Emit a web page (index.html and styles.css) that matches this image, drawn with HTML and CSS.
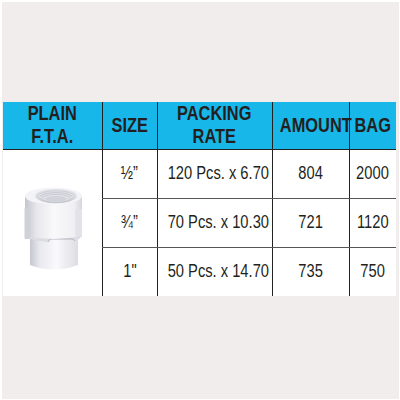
FILE: index.html
```html
<!DOCTYPE html>
<html>
<head>
<meta charset="utf-8">
<link rel="stylesheet" href="styles.css">
</head>
<body>
<div class="frame">
  <table class="price">
    <colgroup>
      <col class="c1"><col class="c2"><col class="c3"><col class="c4"><col class="c5">
    </colgroup>
    <thead>
      <tr>
        <th class="first"><span class="t">PLAIN<br>F.T.A.</span></th>
        <th><span class="t">SIZE</span></th>
        <th><span class="t">PACKING<br>RATE</span></th>
        <th><span class="t">AMOUNT</span></th>
        <th class="last"><span class="t">BAG</span></th>
      </tr>
    </thead>
    <tbody>
      <tr>
        <td class="pic" rowspan="3">
          <svg class="fitting" width="64" height="86" viewBox="0 0 64 86">
            <defs>
              <linearGradient id="body" x1="0" x2="1" y1="0" y2="0">
                <stop offset="0" stop-color="#c4c4ce"/>
                <stop offset="0.2" stop-color="#e6e6ec"/>
                <stop offset="0.5" stop-color="#f9f9fb"/>
                <stop offset="0.85" stop-color="#f0f0f4"/>
                <stop offset="1" stop-color="#d6d6de"/>
              </linearGradient>
              <linearGradient id="low" x1="0" x2="1" y1="0" y2="0">
                <stop offset="0" stop-color="#c6c6d0"/>
                <stop offset="0.2" stop-color="#e8e8ee"/>
                <stop offset="0.55" stop-color="#fafafc"/>
                <stop offset="1" stop-color="#dcdce3"/>
              </linearGradient>
            </defs>
            <!-- lower cylinder -->
            <path d="M8 50 L8 79 Q32 88 56 79 L56 50 Z" fill="url(#low)"/>
            <!-- hex ledge -->
            <path d="M3 46 L3 51 Q12 55 26 56 L28 53 L51 53 L53 55 Q58 53 60 50 L60 46 Z" fill="#dcdce3"/>
            <path d="M26 56 L28 53 L51 53 L53 55" fill="none" stroke="#b4b4be" stroke-width="1"/>
            <!-- upper body -->
            <path d="M3 10 L3 50 Q30 56 60 50 L60 10 Z" fill="url(#body)"/>
            <!-- flats -->
            <rect x="2.5" y="22" width="5.5" height="31" rx="1" fill="#d0d0d9"/>
            <rect x="53.5" y="23" width="6.5" height="27" rx="1" fill="#e2e2e8"/>
            <!-- top face -->
            <ellipse cx="31.5" cy="10" rx="28.5" ry="8.5" fill="#f4f4f8"/>
            <ellipse cx="34" cy="10" rx="21" ry="7" fill="#e0e0e7"/>
            <ellipse cx="34" cy="10.8" rx="19" ry="6" fill="none" stroke="#cacad2" stroke-width="0.8"/>
            <ellipse cx="34" cy="11.6" rx="16.5" ry="5" fill="none" stroke="#c2c2cb" stroke-width="0.8"/>
            <ellipse cx="34" cy="12.4" rx="14" ry="4" fill="none" stroke="#c6c6ce" stroke-width="0.8"/>
            <ellipse cx="34" cy="13" rx="11" ry="3" fill="#d2d2da"/>
          </svg>
        </td>
        <td><span class="t">½”</span></td>
        <td><span class="t">120 Pcs. x 6.70</span></td>
        <td><span class="t">804</span></td>
        <td class="last"><span class="t">2000</span></td>
      </tr>
      <tr>
        <td><span class="t">¾”</span></td>
        <td><span class="t">70 Pcs. x 10.30</span></td>
        <td><span class="t">721</span></td>
        <td class="last"><span class="t">1120</span></td>
      </tr>
      <tr class="end">
        <td><span class="t">1"</span></td>
        <td><span class="t">50 Pcs. x 14.70</span></td>
        <td><span class="t">735</span></td>
        <td class="last"><span class="t">750</span></td>
      </tr>
    </tbody>
  </table>
</div>
</body>
</html>
```

FILE: styles.css
```css
html, body {
  margin: 0;
  padding: 0;
  background: #ffffff;
}
.frame {
  box-sizing: border-box;
  width: 398px;
  height: 398px;
  margin: 1px 0 0 1px;
  border-top: 1px solid #ffffff;
  border-left: 1px solid #ffffff;
  background: #f2eded;
  padding: 100px 0 0 1px;
}
.price {
  border-collapse: collapse;
  table-layout: fixed;
  width: 393px;
  font-family: "Liberation Sans", Arial, sans-serif;
  color: #231f20;
}
.c1 { width: 99px; }
.c2 { width: 55px; }
.c3 { width: 115px; }
.c4 { width: 77px; }
.c5 { width: 47px; }

.t {
  display: inline-block;
  white-space: nowrap;
  transform: scaleX(0.84);
  transform-origin: center;
}
.price th {
  background: #17b7ea;
  height: 47px;
  padding: 0;
  font-size: 19.5px;
  line-height: 23px;
  font-weight: bold;
  text-align: center;
  vertical-align: middle;
  border-left: 1px solid #222;
  border-bottom: 1px solid #222;
  box-sizing: border-box;
}
.price th.first { border-left: none; }
.price td {
  background: #ffffff;
  height: 49px;
  padding: 0;
  font-size: 17.5px;
  text-align: center;
  vertical-align: middle;
  border-left: 1px solid #222;
  border-bottom: 1px solid #555;
  box-sizing: border-box;
}
.price td.pic {
  border-left: none;
  border-bottom: none;
  vertical-align: top;
  padding-top: 36px;
  text-align: left;
  padding-left: 19px;
}
.price tr.end td { border-bottom: none; }
.fitting { display: block; }
```
